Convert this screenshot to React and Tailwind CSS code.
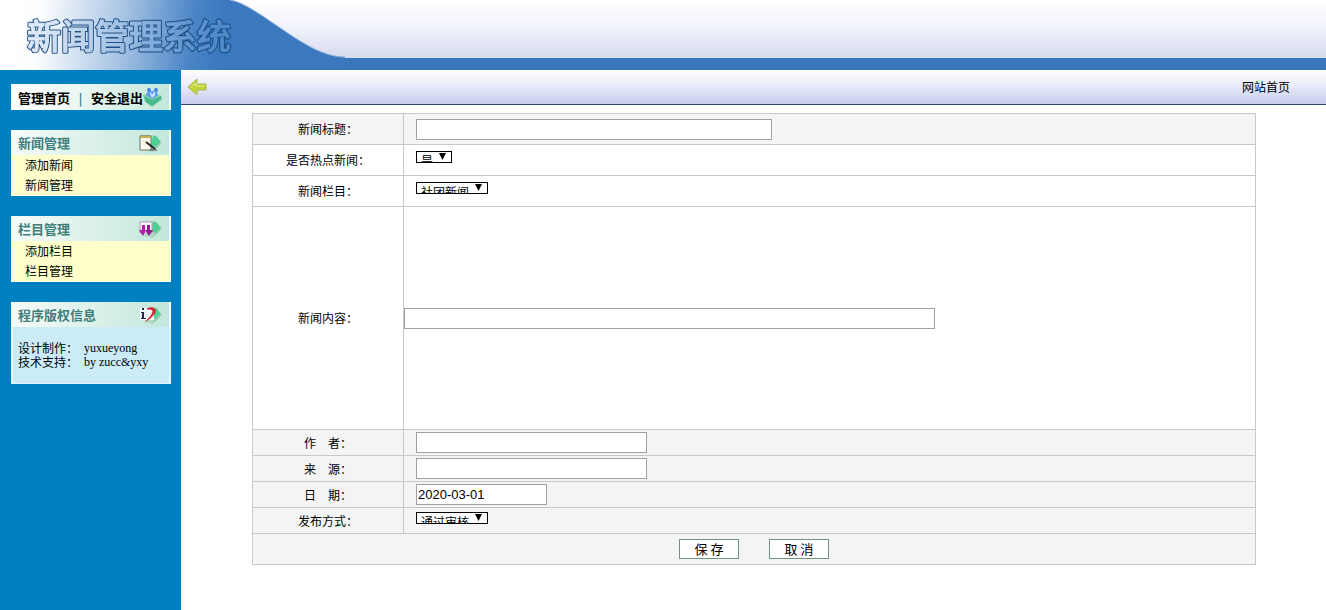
import React from 'react';

const menuGroups = [
  { id: 'news', title: '新闻管理', icon: 'note', links: ['添加新闻', '新闻管理'] },
  { id: 'column', title: '栏目管理', icon: 'download', links: ['添加栏目', '栏目管理'] },
];

const Leaf = () => (
  <>
    <path d="M12 2 L18 2 L24 10 L15 19 L5 17 L12 13 Z" fill="#b4d8c6" />
    <path d="M15 3 L18 3 L23 9 L17 14 L13 12 Z" fill="#4fcf92" />
    <path d="M17 14 L23 9 L20 14 L14 18 Z" fill="#8fc9ae" />
  </>
);

const icons = {
  note: (
    <>
      <Leaf />
      <path d="M2 3 H13 V17 H2 Z" fill="#fffdf2" stroke="#6b6b5c" />
      <path d="M2 3 H13 V5 H2 Z" fill="#e0c860" />
      <path d="M3 2 V5 M6 2 V5 M9 2 V5 M12 2 V5" stroke="#8a7a30" />
      <path d="M8 9 L17 16" stroke="#222" strokeWidth="2" />
      <path d="M5 8 H8 M5 11 H8" stroke="#e6d9a0" />
      <path d="M12 17 H19" stroke="#444" />
    </>
  ),
  download: (
    <>
      <Leaf />
      <path d="M2 3 H14 V14 H2 Z" fill="#fff" stroke="#b58fb8" />
      <path d="M4 6 H7 V11 H8 L5 17 L1 11 H4 Z" fill="#b01fa8" />
      <path d="M9 6 H12 V11 H15 L11 17 L7 11 H9 Z" fill="#8f1a92" />
    </>
  ),
  info: (
    <>
      <Leaf />
      <path d="M2 3 H16 V15 H2 Z" fill="#fff" opacity="0.85" />
      <path d="M4 3 H6 V5 H4 Z M3 7 H6 V13 H8 V14 H3 V13 H4 V8 H3 Z" fill="#25234f" />
      <path d="M9 4 C14 1 20 4 16 9 C14 12 11 14 8 16 C11 13 14 10 15 7 C15 4 12 4 9 4 Z" fill="#d02838" stroke="#d02838" />
    </>
  ),
};

const CardIcon = ({ name }) => (
  <svg className="w-6 h-5 shrink-0" viewBox="0 0 24 20" aria-hidden="true">
    {icons[name]}
  </svg>
);

const CardHeader = ({ title, icon }) => (
  <div className="flex items-center justify-between h-[25px] pl-[7px] pr-[7px] pt-px border-r-2 border-white bg-linear-to-r from-[#f6fbf9] via-[#dcf1e9] to-[#c2e8dc]">
    <h2 className="text-[13px] font-bold text-[#3f7f7c]">{title}</h2>
    <CardIcon name={icon} />
  </div>
);

const Header = () => (
  <header className="flex h-[70px]">
    <svg className="w-[345px] h-[70px] shrink-0" viewBox="0 0 345 70" role="img" aria-label="新闻管理系统">
      <defs>
        <linearGradient id="sky" x1="0" y1="0" x2="0" y2="1">
          <stop offset="0" stopColor="#ffffff" />
          <stop offset="0.5" stopColor="#f0f2fb" />
          <stop offset="1" stopColor="#d5daee" />
        </linearGradient>
        <linearGradient id="wave" gradientUnits="userSpaceOnUse" x1="20" y1="0" x2="225" y2="26">
          <stop offset="0" stopColor="#ffffff" />
          <stop offset="0.12" stopColor="#fafcfe" />
          <stop offset="0.5" stopColor="#a9c5e4" />
          <stop offset="0.85" stopColor="#4a84c6" />
          <stop offset="1" stopColor="#3a78bf" />
        </linearGradient>
        <mask id="hollow">
          <rect width="345" height="70" fill="#fff" />
          <text x="27" y="49" className="text-[34px] font-medium" fill="#000" stroke="#000" strokeWidth="1" strokeLinejoin="round">新闻管理系统</text>
        </mask>
      </defs>
      <rect width="345" height="58" fill="url(#sky)" />
      <path d="M0 0 H230 C256 4 300 50 335 56 Q340 57 345 57 V70 H0 Z" fill="url(#wave)" />
      <path d="M230 0 C256 4 300 50 335 56 Q340 57 345 57" fill="none" stroke="#8fb4dc" />
      <text x="27" y="49" className="text-[34px] font-medium" fill="#8fb8e6" fillOpacity="0.3">新闻管理系统</text>
      <text x="27" y="49" className="text-[34px] font-medium" fill="#1d4f86" stroke="#1d4f86" strokeWidth="3" strokeLinejoin="round" mask="url(#hollow)">新闻管理系统</text>
    </svg>
    <div className="flex-1 border-b-[12px] border-[#3a78bd] bg-linear-to-b from-white via-[#f0f2fb] to-[#d5daee]"></div>
  </header>
);

const Sidebar = () => (
  <aside className="w-[181px] shrink-0 bg-[#0180c1] pl-[11px] pr-[10px] pt-[14px] space-y-5">
    <nav className="flex items-center h-[26px] pl-[7px] pt-px border-r-2 border-white bg-linear-to-r from-white via-[#e6f5f0] to-[#c2e8dc] text-[13px] font-bold whitespace-nowrap">
      <a href="#home">管理首页</a>
      <span className="w-[21px] shrink-0 text-center text-xs text-[#3f7f7c]" aria-hidden="true">|</span>
      <a href="#logout">安全退出</a>
      <svg className="w-5 h-[22px] shrink-0" viewBox="0 0 20 22" aria-hidden="true">
        <path d="M0 8 L9 5 L19 9 L19 13 L9 20 L2 15 Z" fill="#8bcfaf" />
        <path d="M1 9 L9 13 L18 9 L18 12 L9 19 L3 15 Z" fill="#45b98a" />
        <path d="M4 9 C2 6 5 4 9 4 C14 4 16 6 14 9 L9 12 Z" fill="#5c9cf0" />
        <circle cx="6" cy="3" r="2" fill="#3c80e4" />
        <circle cx="13" cy="3" r="2" fill="#3c80e4" />
        <path d="M7 4 L9 8 L12 4 L12 8 L9 11 L7 7 Z" fill="#d6e8ff" />
      </svg>
    </nav>

    {menuGroups.map((group) => (
      <section key={group.id}>
        <CardHeader title={group.title} icon={group.icon} />
        <ul className="bg-[#ffffcc] border-r-2 border-b border-[#ffffe8] pl-[14px] text-xs leading-5">
          {group.links.map((link) => (
            <li key={link}>
              <a href={`#${group.id}`}>{link}</a>
            </li>
          ))}
        </ul>
      </section>
    ))}

    <section>
      <CardHeader title="程序版权信息" icon="info" />
      <div className="h-[57px] bg-[#cbecf6] border-x-2 border-b border-[#e2f5fa] pl-[5px] pt-[14px] text-xs leading-[14px] whitespace-nowrap">
        <p className="flex gap-[6px]">
          设计制作：<span className="font-['Liberation_Serif',serif]">yuxueyong</span>
        </p>
        <p className="flex gap-[6px]">
          技术支持：<span className="font-['Liberation_Serif',serif]">by zucc&amp;yxy</span>
        </p>
      </div>
    </section>
  </aside>
);

const Toolbar = () => (
  <div className="flex items-center justify-between h-[35px] pl-[6px] pr-9 border-b border-[#34466e] bg-linear-to-b from-white via-[#e6e9f8] to-[#c6cdec]">
    <button type="button" aria-label="返回">
      <svg className="w-5 h-[18px]" viewBox="0 0 20 18" aria-hidden="true">
        <path d="M1 9 L10 1 V6 H19 V12 H10 V17 Z" fill="#c5d435" stroke="#a9b45c" />
        <path d="M4 9 L9 5 V8 H17" fill="none" stroke="#e9ee9a" />
      </svg>
    </button>
    <a href="#site" className="text-xs">网站首页</a>
  </div>
);

const Row = ({ id, label, height, shaded, flush, children }) => (
  <tr className={`${height} ${shaded ? 'bg-[#f4f4f4]' : 'bg-white'}`}>
    <th scope="row" className="w-[151px] border border-[#c8c8c8] p-0 font-normal">
      <label htmlFor={id}>{label}</label>
    </th>
    <td className={`border border-[#c8c8c8] py-0 pr-0 ${flush ? 'pl-0' : 'pl-3'}`}>{children}</td>
  </tr>
);

const TextInput = ({ width, ...props }) => (
  <input
    type="text"
    className={`block ${width} h-[21px] border border-[#a0a0a0] bg-white px-px font-['Liberation_Sans',sans-serif] text-[13px]`}
    {...props}
  />
);

const Select = ({ id, width, options }) => (
  <div className={`relative ${width} h-3 mb-[6px]`}>
    <select
      id={id}
      className="block w-full h-3 appearance-none overflow-hidden border border-black bg-white pl-1 pt-[3px] pb-0 text-xs leading-3"
    >
      {options.map((option) => (
        <option key={option}>{option}</option>
      ))}
    </select>
    <svg className="absolute right-[6px] top-[2px] w-[7px] h-[7px] pointer-events-none" viewBox="0 0 7 7" aria-hidden="true">
      <path d="M0 0 H7 L3.5 7 Z" />
    </svg>
  </div>
);

const NewsForm = () => (
  <form className="pl-[71px] pr-[70px] pt-2" onSubmit={(e) => e.preventDefault()}>
    <table className="w-full table-fixed border-collapse text-xs">
      <tbody>
        <Row id="title" label="新闻标题：" height="h-[31px]" shaded>
          <TextInput id="title" width="w-[356px]" />
        </Row>
        <Row id="hot" label="是否热点新闻：" height="h-[31px]">
          <Select id="hot" width="w-9" options={['是', '否']} />
        </Row>
        <Row id="category" label="新闻栏目：" height="h-[31px]">
          <Select id="category" width="w-[72px]" options={['社团新闻']} />
        </Row>
        <Row id="content" label="新闻内容：" height="h-[223px]" flush>
          <TextInput id="content" width="w-[531px]" />
        </Row>
        <Row id="author" label="作　者：" height="h-[26px]" shaded>
          <TextInput id="author" width="w-[231px]" />
        </Row>
        <Row id="source" label="来　源：" height="h-[26px]" shaded>
          <TextInput id="source" width="w-[231px]" />
        </Row>
        <Row id="date" label="日　期：" height="h-[26px]" shaded>
          <TextInput id="date" width="w-[131px]" defaultValue="2020-03-01" />
        </Row>
        <Row id="publish" label="发布方式：" height="h-[26px]" shaded>
          <Select id="publish" width="w-[72px]" options={['通过审核']} />
        </Row>
        <tr className="h-[31px] bg-[#f4f4f4]">
          <td colSpan={2} className="border border-[#c8c8c8] p-0">
            <div className="flex justify-center gap-[30px]">
              <button type="submit" className="w-[60px] h-5 border border-[#6f9484] bg-white text-[13px] leading-4">保 存</button>
              <button type="reset" className="w-[60px] h-5 border border-[#6f9484] bg-white text-[13px] leading-4">取 消</button>
            </div>
          </td>
        </tr>
      </tbody>
    </table>
  </form>
);

const App = () => (
  <div className="flex flex-col min-h-screen bg-white text-black font-['Noto_Sans_CJK_SC',sans-serif]">
    <Header />
    <div className="flex flex-1">
      <Sidebar />
      <main className="flex-1 min-w-0">
        <Toolbar />
        <NewsForm />
      </main>
    </div>
  </div>
);

export default App;
